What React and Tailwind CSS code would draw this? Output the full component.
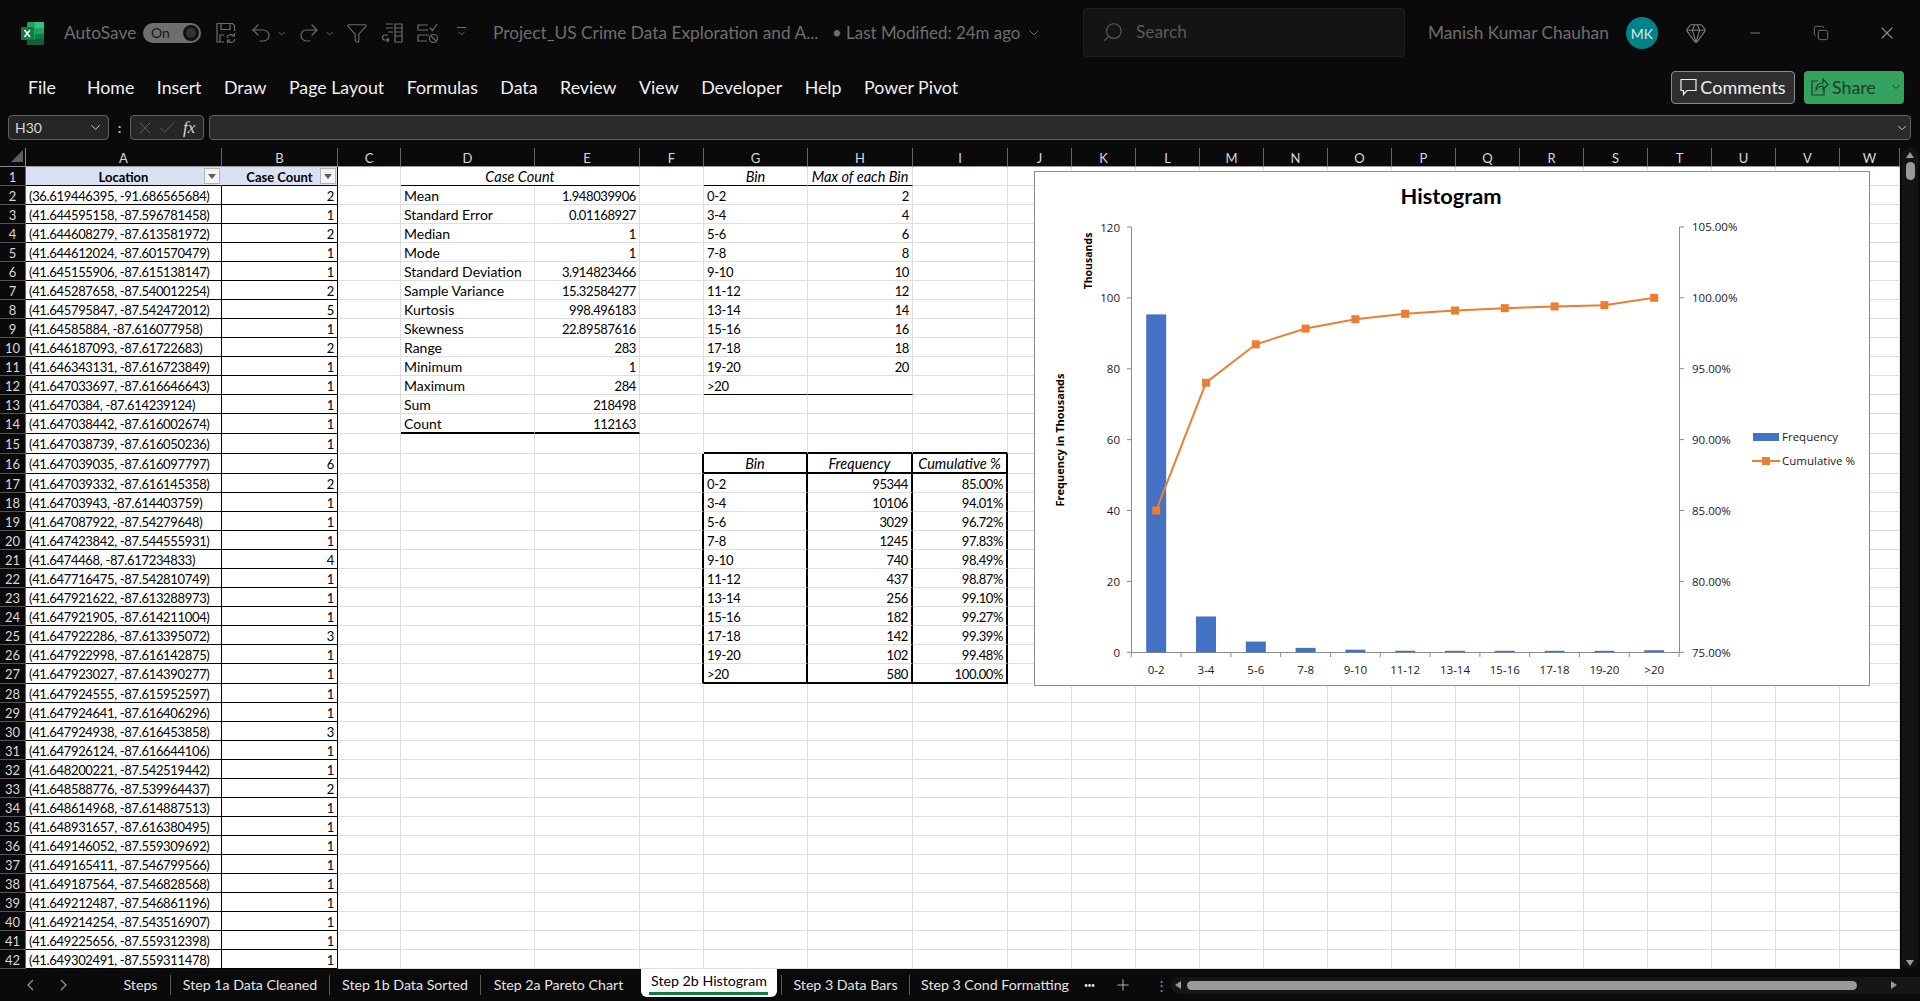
import React from 'react';
import { Check, ChevronDown, Copy, Filter, Gem, Minus, Plus, Redo2, Search, Undo2, X } from 'lucide-react';

const columns = ['A', 'B', 'C', 'D', 'E', 'F', 'G', 'H', 'I', 'J', 'K', 'L', 'M', 'N', 'O', 'P', 'Q', 'R', 'S', 'T', 'U', 'V', 'W'];
const tallRows = [14, 15, 16, 27];

const locations = [
  ['(36.619446395, -91.686565684)', 2],
  ['(41.644595158, -87.596781458)', 1],
  ['(41.644608279, -87.613581972)', 2],
  ['(41.644612024, -87.601570479)', 1],
  ['(41.645155906, -87.615138147)', 1],
  ['(41.645287658, -87.540012254)', 2],
  ['(41.645795847, -87.542472012)', 5],
  ['(41.64585884, -87.616077958)', 1],
  ['(41.646187093, -87.61722683)', 2],
  ['(41.646343131, -87.616723849)', 1],
  ['(41.647033697, -87.616646643)', 1],
  ['(41.6470384, -87.614239124)', 1],
  ['(41.647038442, -87.616002674)', 1],
  ['(41.647038739, -87.616050236)', 1],
  ['(41.647039035, -87.616097797)', 6],
  ['(41.647039332, -87.616145358)', 2],
  ['(41.64703943, -87.614403759)', 1],
  ['(41.647087922, -87.54279648)', 1],
  ['(41.647423842, -87.544555931)', 1],
  ['(41.6474468, -87.617234833)', 4],
  ['(41.647716475, -87.542810749)', 1],
  ['(41.647921622, -87.613288973)', 1],
  ['(41.647921905, -87.614211004)', 1],
  ['(41.647922286, -87.613395072)', 3],
  ['(41.647922998, -87.616142875)', 1],
  ['(41.647923027, -87.614390277)', 1],
  ['(41.647924555, -87.615952597)', 1],
  ['(41.647924641, -87.616406296)', 1],
  ['(41.647924938, -87.616453858)', 3],
  ['(41.647926124, -87.616644106)', 1],
  ['(41.648200221, -87.542519442)', 1],
  ['(41.648588776, -87.539964437)', 2],
  ['(41.648614968, -87.614887513)', 1],
  ['(41.648931657, -87.616380495)', 1],
  ['(41.649146052, -87.559309692)', 1],
  ['(41.649165411, -87.546799566)', 1],
  ['(41.649187564, -87.546828568)', 1],
  ['(41.649212487, -87.546861196)', 1],
  ['(41.649214254, -87.543516907)', 1],
  ['(41.649225656, -87.559312398)', 1],
  ['(41.649302491, -87.559311478)', 1],
];

const stats = [
  ['Mean', '1.948039906'],
  ['Standard Error', '0.01168927'],
  ['Median', '1'],
  ['Mode', '1'],
  ['Standard Deviation', '3.914823466'],
  ['Sample Variance', '15.32584277'],
  ['Kurtosis', '998.496183'],
  ['Skewness', '22.89587616'],
  ['Range', '283'],
  ['Minimum', '1'],
  ['Maximum', '284'],
  ['Sum', '218498'],
  ['Count', '112163'],
];

const bins = ['0-2', '3-4', '5-6', '7-8', '9-10', '11-12', '13-14', '15-16', '17-18', '19-20', '>20'];
const frequency = [95344, 10106, 3029, 1245, 740, 437, 256, 182, 142, 102, 580];
const cumulative = [85.0, 94.01, 96.72, 97.83, 98.49, 98.87, 99.1, 99.27, 99.39, 99.48, 100.0];

const blackBottom = 'border-b-black';
const thickBottom = 'border-b-2 border-b-black';
const thickRight = 'border-r-2 border-r-black';

// what sits in a given cell: text, kind (num | label | head) and any non-gridline borders
const getCell = (col, row) => {
  const cell = { text: '', kind: 'num', right: false, cls: '' };

  if (col === 'A' && row > 1) {
    cell.text = locations[row - 2][0];
    cell.cls = 'border-r-black border-b-black';
  }
  if (col === 'B' && row > 1) {
    cell.text = locations[row - 2][1];
    cell.right = true;
    cell.cls = 'border-r-black border-b-black';
  }
  if ((col === 'D' || col === 'E') && row >= 2 && row <= 14) {
    cell.text = stats[row - 2][col === 'D' ? 0 : 1];
    cell.kind = col === 'D' ? 'label' : 'num';
    cell.right = col === 'E';
    if (row === 14) cell.cls = thickBottom;
  }
  if ((col === 'G' || col === 'H') && row >= 2 && row <= 12) {
    if (col === 'G') cell.text = bins[row - 2];
    else if (row < 12) {
      cell.text = (row - 1) * 2;
      cell.right = true;
    }
    if (row === 12) cell.cls = blackBottom;
  }
  if (row === 1 && col === 'G') {
    cell.text = 'Bin';
    cell.kind = 'head';
    cell.cls = blackBottom;
  }
  if (row === 1 && col === 'H') {
    cell.text = 'Max of each Bin';
    cell.kind = 'head';
    cell.cls = blackBottom;
  }

  // frequency table, G16:I27
  if (row === 15 && ['G', 'H', 'I'].includes(col)) cell.cls = thickBottom;
  if (col === 'F' && row >= 16 && row <= 27) cell.cls = thickRight;
  if (['G', 'H', 'I'].includes(col) && row >= 16 && row <= 27) {
    const i = row - 17;
    const bottom = row === 16 || row === 27 ? thickBottom : '';
    cell.cls = `${thickRight} ${bottom}`;
    if (row === 16) {
      cell.text = { G: 'Bin', H: 'Frequency', I: 'Cumulative %' }[col];
      cell.kind = 'head';
    } else if (col === 'G') {
      cell.text = bins[i];
    } else if (col === 'H') {
      cell.text = frequency[i];
      cell.right = true;
    } else {
      cell.text = `${cumulative[i].toFixed(2)}%`;
      cell.right = true;
    }
  }
  return cell;
};

const cellText = (cell) => {
  if (cell.kind === 'head') return 'text-center text-[14.500px] italic';
  if (cell.kind === 'label') return 'pl-[3px] text-left text-[14px]';
  if (cell.right) return 'pr-[3px] text-right tracking-[-0.4px]';
  return 'pl-[3px] text-left tracking-[-0.33px]';
};

const FilterButton = () => (
  <span className="absolute right-px top-px flex h-4 w-4 items-center justify-center border border-[#b4b4b4] bg-[#f4f4f4]">
    <span className="h-0 w-0 border-x-[4px] border-t-[5px] border-x-transparent border-t-[#5f5f5f]" />
  </span>
);

const Sheet = () => (
  <div className="relative h-[821px] w-[1900px] overflow-hidden bg-white font-[Lato] text-[13px] leading-[18px] text-black">
    <div className="grid grid-cols-[26px_196px_116px_63px_134px_105px_64px_104px_105px_95px_repeat(13,64px)_60px]">
      <div className="flex h-[19px] items-center justify-center border-b border-r border-[#8c8c8c] bg-[#0a0a0a]">
        <span className="mb-[2px] ml-[8px] h-0 w-0 border-b-[12px] border-l-[12px] border-b-[#5f5f5f] border-l-transparent" />
      </div>
      {columns.map((col) => (
        <div key={col} className="h-[19px] border-b border-r border-b-[#9a9a9a] border-r-[#666] bg-[#0a0a0a] pt-px text-center text-[#d8d8d8]">
          {col}
        </div>
      ))}

      {Array.from({ length: 42 }, (_, r) => r + 1).map((row) => (
        <React.Fragment key={row}>
          <div
            className={`border-b border-r border-b-[#555] border-r-[#666] bg-[#0a0a0a] pt-px text-center text-[#d8d8d8] ${
              tallRows.includes(row) ? 'h-[20px]' : 'h-[19px]'
            }`}
          >
            {row}
          </div>
          {columns.map((col) => {
            if (row === 1 && col === 'A') {
              return (
                <div key={col} className="relative h-[19px] border-b border-r border-b-black border-r-[#dedede] bg-[#d9e1f2] pt-px text-center font-bold">
                  Location
                  <FilterButton />
                </div>
              );
            }
            if (row === 1 && col === 'B') {
              return (
                <div key={col} className="relative h-[19px] border-b border-r border-b-black border-r-black bg-[#d9e1f2] pt-px text-center font-bold">
                  Case Count
                  <FilterButton />
                </div>
              );
            }
            if (row === 1 && col === 'D') {
              return (
                <div key={col} className="col-span-2 h-[19px] border-b border-r border-b-black border-r-[#dedede] pt-px text-center text-[14.500px] italic">
                  Case Count
                </div>
              );
            }
            if (row === 1 && col === 'E') return null;
            const cell = getCell(col, row);
            return (
              <div
                key={col}
                className={`overflow-hidden whitespace-nowrap border-b border-r border-[#dedede] pt-px ${
                  tallRows.includes(row) ? 'h-[20px]' : 'h-[19px]'
                } ${cellText(cell)} ${cell.cls}`}
              >
                {cell.text}
              </div>
            );
          })}
        </React.Fragment>
      ))}
    </div>
    <HistogramChart />
  </div>
);

const yLeft = (v) => 652.3 - v * 3.544;
const yRight = (p) => 652.3 - (p - 75) * 14.18;
const xAt = (i) => 1131.3 + 49.8 * (i + 0.5);

const HistogramChart = () => {
  const points = cumulative.map((p, i) => `${xAt(i)},${yRight(p)}`).join(' ');
  return (
    <div className="absolute left-[1034px] top-[23px] h-[515px] w-[836px] border border-[#8c8c8c] bg-white">
      <svg viewBox="1035 172 834 513" className="block h-[513px] w-[834px] font-['Open_Sans',sans-serif] text-[11.5px]">
        <text x="1451" y="204" textAnchor="middle" fontSize="21.800" fontWeight="700" fontFamily="Lato, sans-serif">Histogram</text>

        {/* axes */}
        <g stroke="#8c8c8c" fill="none">
          <path d="M1131.5 227V652.5H1679.5V227" />
          {[0, 20, 40, 60, 80, 100, 120].map((v) => (
            <path key={v} d={`M1127 ${yLeft(v)}H1131.5`} />
          ))}
          {[75, 80, 85, 90, 95, 100, 105].map((p) => (
            <path key={p} d={`M1679.5 ${yRight(p)}H1684`} />
          ))}
          {Array.from({ length: 12 }, (_, i) => (
            <path key={i} d={`M${1131.3 + 49.8 * i} 652.5V657`} />
          ))}
        </g>

        {frequency.map((f, i) => {
          const h = Math.max(652.3 - yLeft(f / 1000), 1.5);
          return <rect key={i} x={xAt(i) - 10} y={652.3 - h} width="20" height={h} fill="#4472c4" />;
        })}

        <polyline points={points} fill="none" stroke="#ed7d31" strokeWidth="2" />
        {cumulative.map((p, i) => (
          <rect key={i} x={xAt(i) - 4} y={yRight(p) - 4} width="8" height="8" fill="#ed7d31" />
        ))}

        {/* labels */}
        <g fill="#1a1a1a">
          {[0, 20, 40, 60, 80, 100, 120].map((v) => (
            <text key={v} x="1120" y={yLeft(v) + 4.5} textAnchor="end">{v}</text>
          ))}
          {[75, 80, 85, 90, 95, 100, 105].map((p) => (
            <text key={p} x="1692" y={yRight(p) + 4.5}>{p.toFixed(2)}%</text>
          ))}
          {bins.map((b, i) => (
            <text key={b} x={xAt(i)} y="674" textAnchor="middle">{b}</text>
          ))}
          <text x="1782" y="441">Frequency</text>
          <text x="1782" y="465">Cumulative %</text>
        </g>
        <text transform="translate(1092 261) rotate(-90)" textAnchor="middle" fontSize="10.500" fontWeight="700">Thousands</text>
        <text transform="translate(1064 440) rotate(-90)" textAnchor="middle" fontSize="11" fontWeight="700">Frequency in Thousands</text>

        {/* legend */}
        <rect x="1753" y="433" width="26" height="8" fill="#4472c4" />
        <path d="M1752 461H1780" stroke="#ed7d31" strokeWidth="2" />
        <rect x="1762" y="457" width="8" height="8" fill="#ed7d31" />
      </svg>
    </div>
  );
};

const ExcelLogo = () => (
  <svg width="23" height="23" viewBox="0 0 23 23" className="ml-[21px]">
    <rect x="6" y="0" width="17" height="23" rx="1.5" fill="#21a366" />
    <rect x="14" y="0" width="9" height="6" fill="#33c481" />
    <rect x="14" y="6" width="9" height="6" fill="#21a366" />
    <rect x="14" y="12" width="9" height="6" fill="#107c41" />
    <rect x="6" y="17" width="17" height="6" fill="#185c37" />
    <rect x="0" y="5" width="13" height="13" rx="1" fill="#107c41" />
    <path d="M3.500 8l5.500 7M9 8l-5.500 7" stroke="#fff" strokeWidth="1.6" />
  </svg>
);

const SaveIcon = () => (
  <svg width="22" height="22" viewBox="0 0 22 22" fill="none" stroke="#6c6c6c" strokeWidth="1.2">
    <path d="M9 20H2V1.500h15.500l2 2V9" />
    <path d="M6 1.500v6h9v-6M5 20v-7h4" />
    <path d="M12 16a4 4 0 0 1 7-2m1 3a4 4 0 0 1-7 2" />
    <path d="M19.500 11v3h-3M12.500 21v-3h3" />
  </svg>
);

const ColumnsIcon = () => (
  <svg width="22" height="22" viewBox="0 0 22 22" fill="none" stroke="#6c6c6c" strokeWidth="1.2">
    <path d="M14 2h7v18h-7zM14 6h7M14 10h7M14 14h7M5 2h7M5 6h7M7 10h5" />
    <path d="M7 13H4a2 2 0 0 0 0 5h4m-2-2l2 2-2 2" />
  </svg>
);

const ChecklistIcon = () => (
  <svg width="22" height="22" viewBox="0 0 22 22" fill="none" stroke="#6c6c6c" strokeWidth="1.2">
    <path d="M11 3H1v5h10M1 13h11M1 13v6h9" />
    <path d="M13 6l2.500 2.500L20 2" />
    <circle cx="16.5" cy="16.5" r="4" />
    <path d="M14 14l5 5" />
  </svg>
);

const ShareIcon = ({ color = '#1f3d2a' }) => (
  <svg width="18" height="20" viewBox="0 0 18 20" fill="none" stroke={color} strokeWidth="1.2">
    <path d="M7 4H1v14h12v-6" />
    <path d="M5 13c0-5 3-7 7-7V2l5 5.500-5 5V9c-3 0-5 1-7 4z" />
  </svg>
);

const TitleBar = () => (
  <div className="flex h-[66px] items-center text-[17.300px] text-[#6e6e6e]">
    <ExcelLogo />
    <span className="ml-[20px] w-[72px] whitespace-nowrap">AutoSave</span>
    <div className="ml-[7px] flex h-[20px] w-[58px] items-center justify-between rounded-full bg-[#6e6e6e] pl-[8px] pr-[2px] text-[14px] leading-none text-[#1a1a1a]">
      On
      <span className="h-[16px] w-[16px] rounded-full border-[3px] border-[#111] bg-[#333]" />
    </div>
    <div className="ml-[14px] flex items-center text-[#6c6c6c]">
      <SaveIcon />
      <Undo2 size={24} strokeWidth={1.2} className="ml-[12px]" />
      <ChevronDown size={11} className="ml-[3px]" />
      <Redo2 size={24} strokeWidth={1.2} className="ml-[10px]" />
      <ChevronDown size={11} className="ml-[3px]" />
      <Filter size={22} strokeWidth={1.2} className="ml-[11px]" />
      <span className="ml-[13px]"><ColumnsIcon /></span>
      <span className="ml-[14px]"><ChecklistIcon /></span>
      <span className="ml-[17px] flex flex-col items-center">
        <span className="h-px w-[9px] bg-[#6c6c6c]" />
        <ChevronDown size={11} />
      </span>
    </div>
    <span className="ml-[26px] w-[339px] whitespace-nowrap">Project_US Crime Data Exploration and A...</span>
    <span className="w-[194px] whitespace-nowrap text-[16.900px]">• Last Modified: 24m ago</span>
    <ChevronDown size={16} strokeWidth={1.5} />
    <div className="ml-[41px] flex h-[49px] w-[322px] -translate-y-[1px] items-center rounded-[3px] border border-[#1e1e1e] bg-[#141414] pl-[18px] text-[#5a5a5a]">
      <Search size={22} strokeWidth={1.3} className="-scale-x-100" />
      <span className="ml-[12px]">Search</span>
    </div>
    <span className="ml-[23px] w-[198px] whitespace-nowrap">Manish Kumar Chauhan</span>
    <div className="flex h-[32px] w-[32px] items-center justify-center rounded-full bg-[#038387] text-[14px] text-[#d5e8e8]">MK</div>
    <Gem size={22} strokeWidth={1.2} className="ml-[27px] text-[#7c7c7c]" />
    <Minus size={16} strokeWidth={1.4} className="ml-[40px] text-[#7c7c7c]" />
    <Copy size={16} strokeWidth={1.3} className="ml-[50px] text-[#7c7c7c]" />
    <X size={20} strokeWidth={1.3} className="ml-[48px] text-[#8c8c8c]" />
  </div>
);

const tabs = ['Home', 'Insert', 'Draw', 'Page Layout', 'Formulas', 'Data', 'Review', 'View', 'Developer', 'Help', 'Power Pivot'];

const RibbonTabs = () => (
  <div className="flex h-[44px] -translate-y-px items-center pl-[28px] pr-[16px] text-[17.800px] text-[#f0f0f0]">
    <span className="mr-[31px]">File</span>
    <div className="flex gap-[22.500px]">
      {tabs.map((tab) => (
        <span key={tab}>{tab}</span>
      ))}
    </div>
    <div className="ml-auto flex h-[33px] w-[124px] items-center justify-center gap-[3px] rounded-[4px] border border-[#8a8a8a] bg-[#2f2f2f] text-[18px]">
      <svg width="17" height="18" viewBox="0 0 17 18" fill="none" stroke="#f0f0f0" strokeWidth="1.2">
        <path d="M1 1.500h15v11H7l-3.500 4v-4H1z" />
      </svg>
      Comments
    </div>
    <div className="ml-[9px] flex h-[33px] w-[100px] items-center rounded-[4px] bg-[#33a35f] pl-[7px] text-[#1f3d2a]">
      <ShareIcon />
      <span className="ml-[3px]">Share</span>
      <ChevronDown size={12} strokeWidth={2} className="ml-[14px]" />
    </div>
  </div>
);

const FormulaBar = () => (
  <div className="mt-[5px] mb-[8px] flex h-[25px] items-stretch pl-[8px] text-[#d8d8d8]">
    <div className="flex w-[101px] items-center justify-between rounded-[4px] border border-[#606060] bg-[#262626] pl-[6px] pr-[5px] text-[14px]">
      H30
      <ChevronDown size={15} strokeWidth={1.5} />
    </div>
    <div className="flex w-[21px] items-center justify-center text-[#c0c0c0]">
      <span className="text-[14px] font-bold leading-none">:</span>
    </div>
    <div className="flex w-[74px] items-center rounded-[4px] border border-[#606060] bg-[#262626] pl-[4px] text-[#6a6a6a]">
      <X size={20} strokeWidth={1} />
      <Check size={20} strokeWidth={1} className="ml-[2px]" />
      <span className="ml-[6px] font-['Liberation_Serif',serif] text-[17px] italic leading-none text-[#d8d8d8]">fx</span>
    </div>
    <div className="ml-[5px] flex w-[1702px] items-center justify-end rounded-[4px] border border-[#606060] bg-[#2a2a2a] pr-[1px]">
      <ChevronDown size={14} strokeWidth={1.5} />
    </div>
  </div>
);

const VerticalScroll = () => (
  <div className="flex h-[821px] w-[20px] flex-col items-center bg-[#0a0a0a]">
    <div className="flex h-[821px] w-[16px] flex-col items-center rounded-full bg-[#141414] pt-[4px] pb-[3px]">
      <span className="h-0 w-0 border-x-[4px] border-b-[6px] border-x-transparent border-b-[#9a9a9a]" />
      <span className="mt-[4px] h-[18px] w-[9px] rounded-full bg-[#9a9a9a]" />
      <span className="mt-auto h-0 w-0 border-x-[4px] border-t-[6px] border-x-transparent border-t-[#9a9a9a]" />
    </div>
  </div>
);

const SheetTabs = () => (
  <div className="flex h-[32px] items-center whitespace-nowrap text-[14.200px] leading-none text-[#e4e4e4]">
    <div className="flex w-[111px] items-center gap-[18px] pl-[24px] text-[#9a9a9a]">
      <svg width="14" height="14" viewBox="0 0 14 14" fill="none" stroke="currentColor" strokeWidth="1.2"><path d="M9 2L4 7l5 5" /></svg>
      <svg width="14" height="14" viewBox="0 0 14 14" fill="none" stroke="currentColor" strokeWidth="1.2"><path d="M5 2l5 5-5 5" /></svg>
    </div>
    <div className="flex h-[20px] w-[60px] items-center justify-center border-r border-[#5a5a5a]">Steps</div>
    <div className="flex h-[20px] w-[159px] items-center justify-center border-r border-[#5a5a5a]">Step 1a Data Cleaned</div>
    <div className="flex h-[20px] w-[151px] items-center justify-center border-r border-[#5a5a5a]">Step 1b Data Sorted</div>
    <div className="flex h-[20px] w-[155px] items-center justify-center">Step 2a Pareto Chart</div>
    <div className="relative ml-[5px] flex h-[28px] w-[136px] -translate-y-[2px] items-center justify-center rounded-b-[6px] bg-white pb-[3px] text-black">
      Step 2b Histogram
      <span className="absolute bottom-[2px] left-[8px] right-[9px] h-[3px] bg-[#107c41]" />
    </div>
    <div className="ml-[4px] flex h-[20px] w-[129px] items-center justify-center border-x border-[#5a5a5a]">Step 3 Data Bars</div>
    <div className="flex w-[170px] justify-center">Step 3 Cond Formatting</div>
    <span className="ml-[4px] text-[7px] tracking-[-0.5px]">•••</span>
    <Plus size={18} strokeWidth={1} className="ml-[19px]" />
    <span className="ml-[23px] text-[13px] text-[#9a9a9a]">⋮</span>
    <div className="ml-auto flex h-[17px] w-[749px] items-center rounded-l-full bg-[#161616] pl-[4px] pr-[23px]">
      <span className="h-0 w-0 border-y-[4px] border-r-[6px] border-y-transparent border-r-[#9a9a9a]" />
      <span className="ml-[6px] h-[9px] w-[670px] rounded-full bg-[#9a9a9a]" />
      <span className="ml-auto h-0 w-0 border-y-[4px] border-l-[6px] border-y-transparent border-l-[#9a9a9a]" />
    </div>
  </div>
);

const App = () => (
  <div className="flex h-[1001px] w-[1920px] flex-col overflow-hidden bg-[#0a0a0a] font-[Lato]">
    <TitleBar />
    <RibbonTabs />
    <FormulaBar />
    <div className="flex">
      <Sheet />
      <VerticalScroll />
    </div>
    <SheetTabs />
  </div>
);

export default App;
